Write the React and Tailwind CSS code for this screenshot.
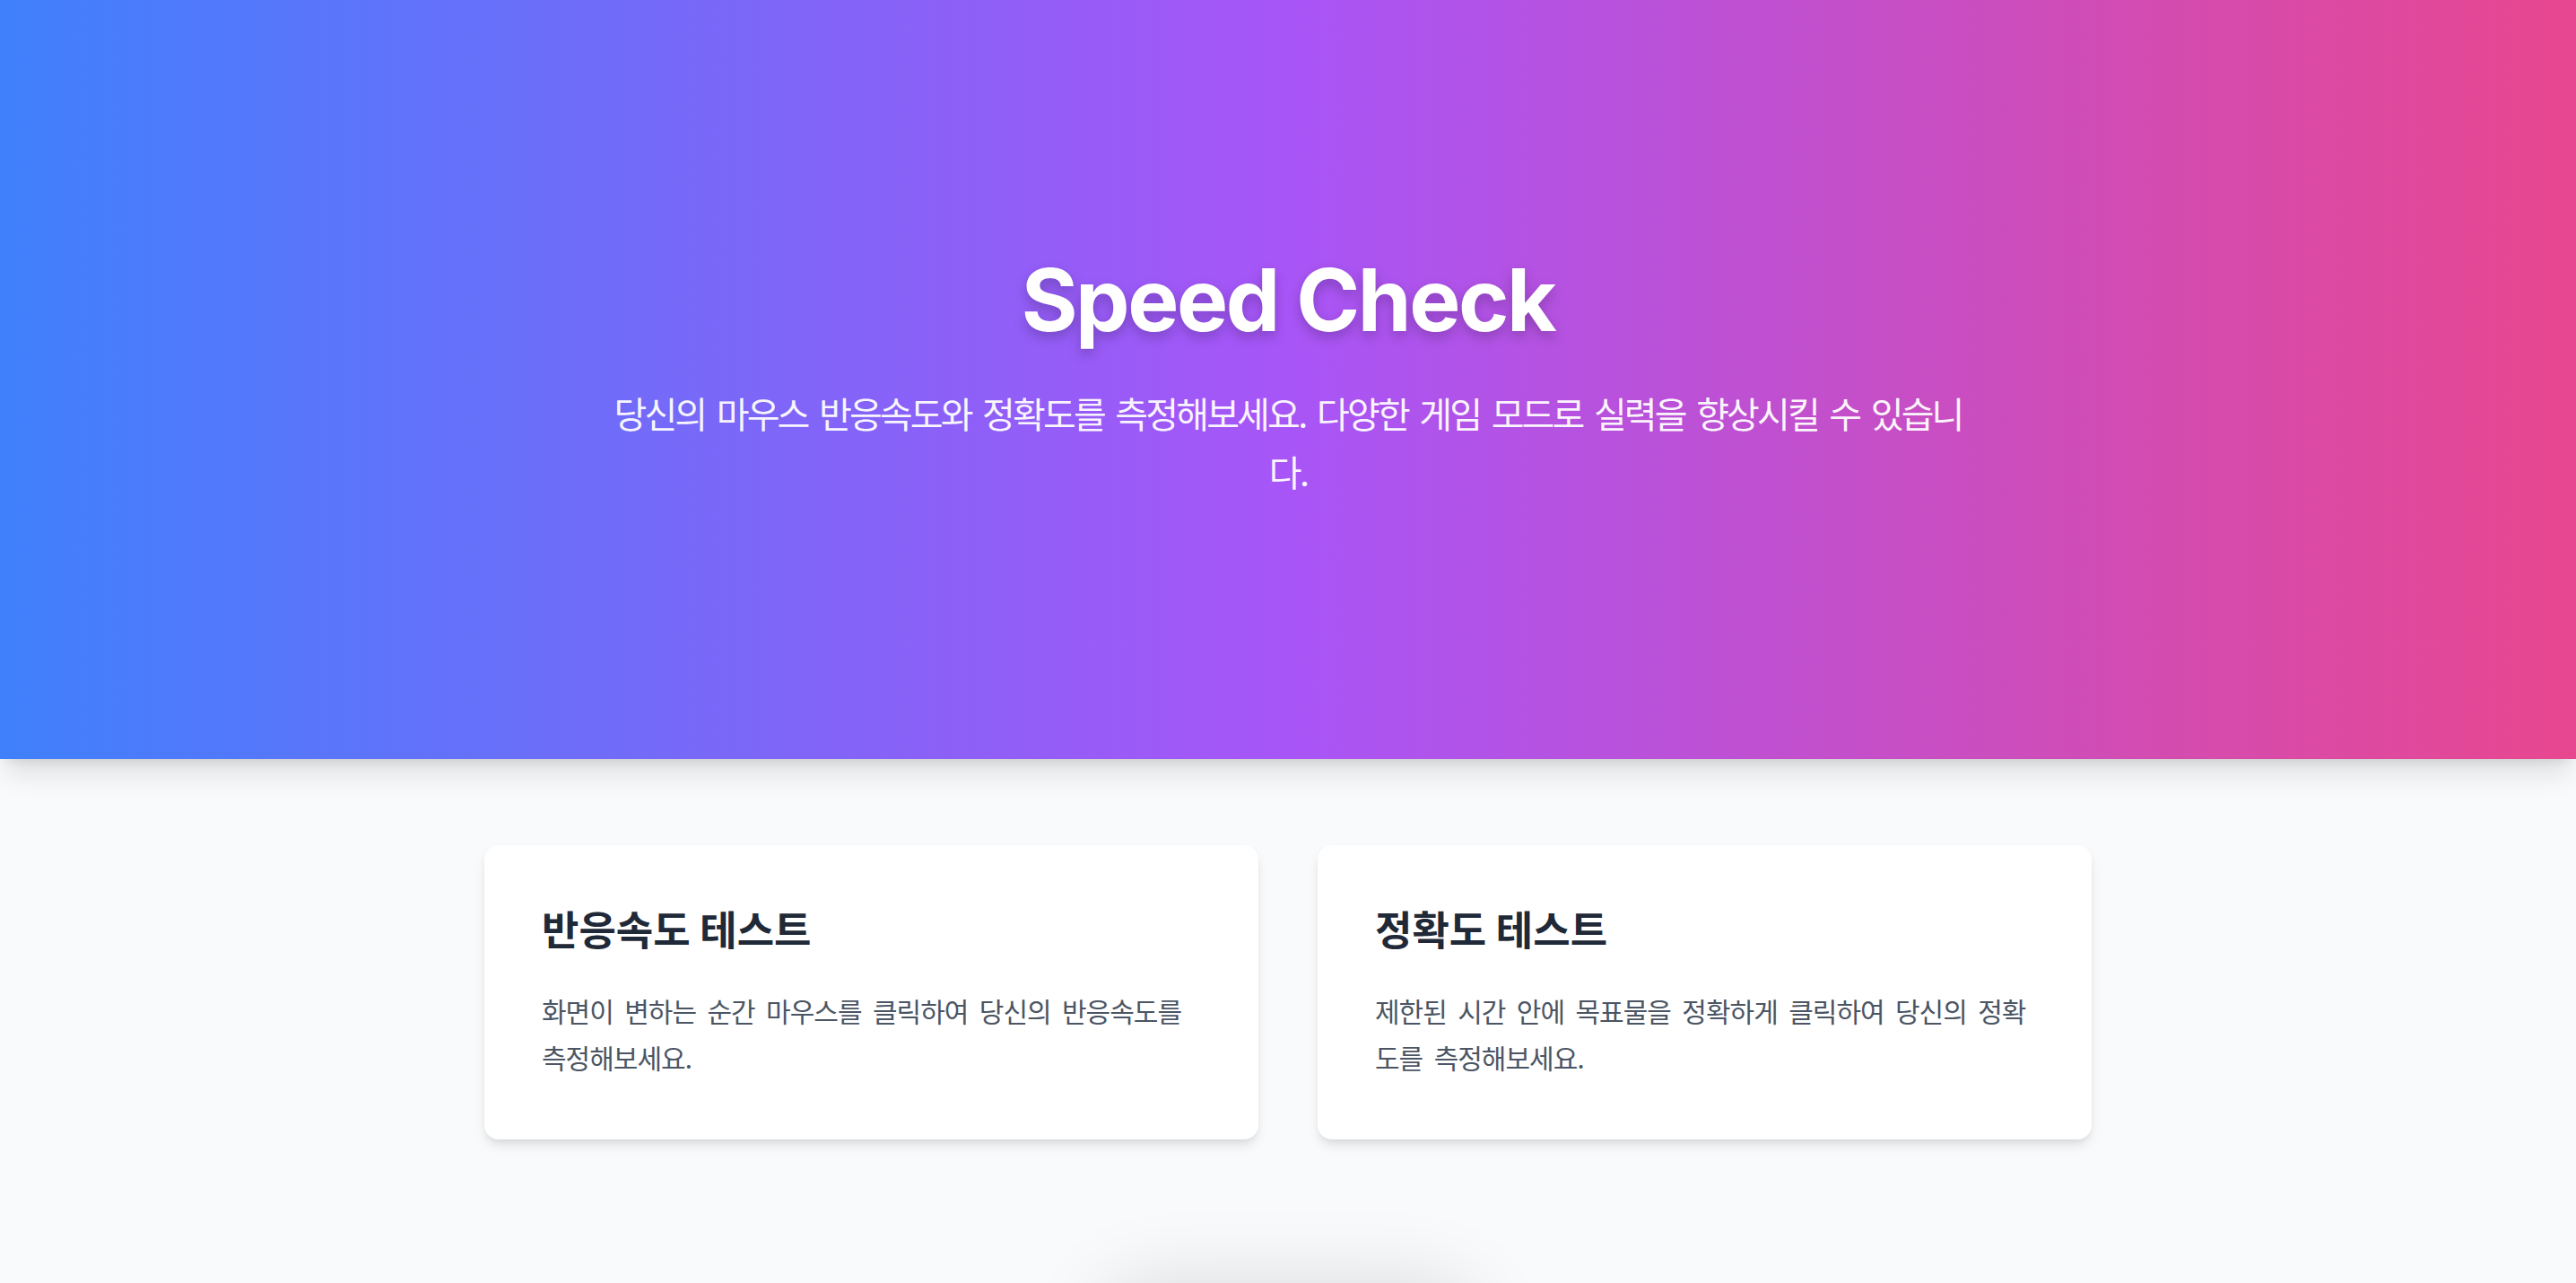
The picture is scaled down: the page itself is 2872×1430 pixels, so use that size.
import React from "react";

const tests = [
  {
    title: "반응속도 테스트",
    desc: "화면이 변하는 순간 마우스를 클릭하여 당신의 반응속도를 측정해보세요.",
  },
  {
    title: "정확도 테스트",
    desc: "제한된 시간 안에 목표물을 정확하게 클릭하여 당신의 정확도를 측정해보세요.",
  },
];

export default function App() {
  return (
    <div className="h-[1430px] overflow-hidden bg-[#f9fafb] font-[Inter,'Noto_Sans_CJK_KR',sans-serif]">
      {/* Hero */}
      <header className="relative z-10 flex h-[846px] flex-col items-center justify-center bg-[linear-gradient(to_right,#3f80fb,#a855f7,#e8478f)] px-8 text-center text-white shadow-[0_20px_30px_-6px_rgba(0,0,0,0.12),0_8px_12px_-8px_rgba(0,0,0,0.12)]">
        <h1 className="mb-[48px] text-[96px] font-bold leading-none tracking-[-0.025em] [text-shadow:0_6px_14px_rgba(0,0,0,0.22)]">
          Speed Check
        </h1>
        <p className="max-w-[1530px] text-[40px] leading-[65px] tracking-[-2.85px] [word-spacing:4px] text-white/95">
          당신의 마우스 반응속도와 정확도를 측정해보세요. 다양한 게임 모드로 실력을 향상시킬 수 있습니다.
        </p>
      </header>

      {/* Test cards */}
      <main className="mx-auto max-w-[1792px] pt-[96px]">
        <div className="grid grid-cols-2 gap-[66px]">
          {tests.map((t) => (
            <div
              key={t.title}
              className="rounded-[16px] bg-white p-[64px] shadow-[0_8px_14px_-2px_rgba(0,0,0,0.1),0_4px_8px_-4px_rgba(0,0,0,0.1)]"
            >
              <h2 className="mb-[32px] text-[45px] font-bold leading-[64px] text-[#1f2937]">
                {t.title}
              </h2>
              <p className="text-[30px] leading-[52px] tracking-[-1px] [word-spacing:5px] text-[#4b5563]">
                {t.desc}
              </p>
            </div>
          ))}
        </div>

        {/* next block, only its shadow reaches the viewport */}
        <div className="mt-[176px] flex justify-center">
          <div className="h-[120px] w-[380px] rounded-[24px] bg-white shadow-[0_0_90px_10px_rgba(0,0,0,0.15)]" />
        </div>
      </main>
    </div>
  );
}
